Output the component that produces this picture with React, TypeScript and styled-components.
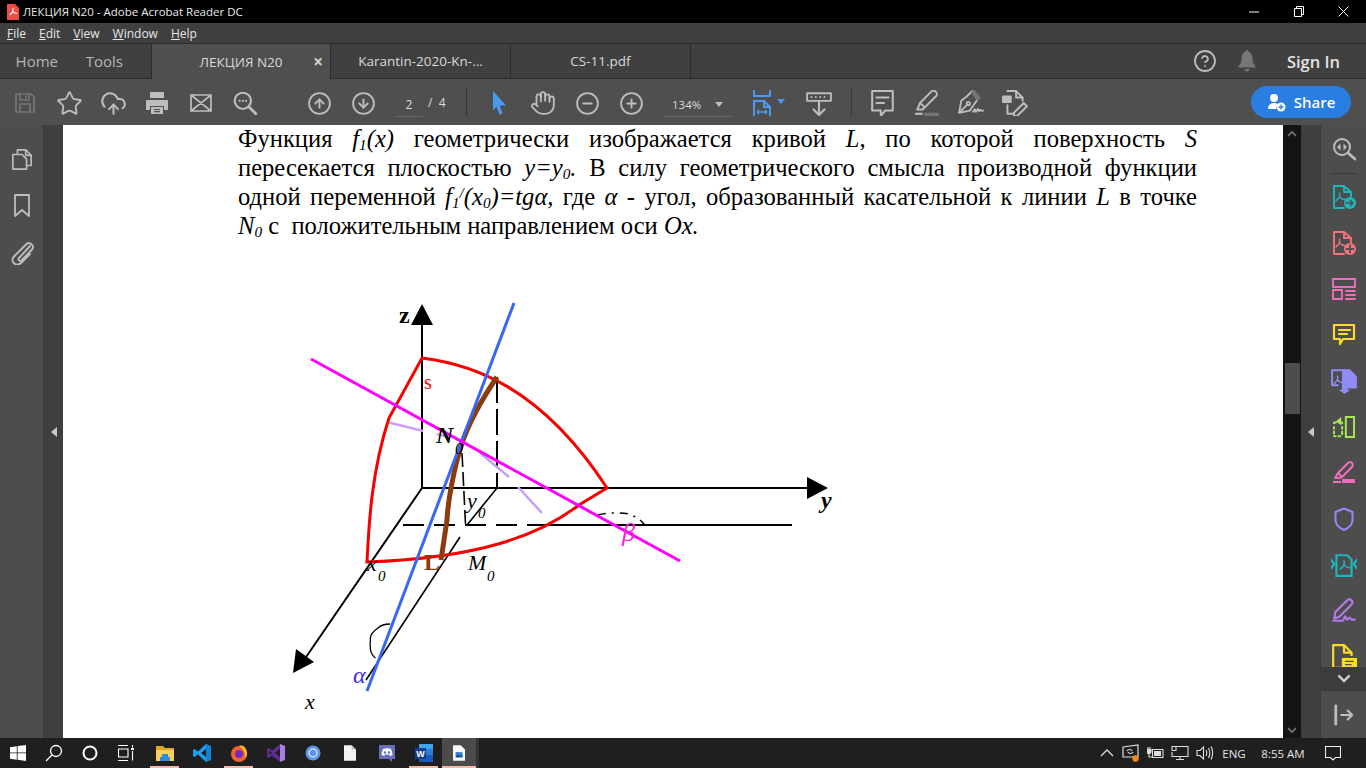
import * as React from "react";
import styled, { createGlobalStyle } from "styled-components";
import {
  CircleArrowDown,
  CircleArrowUp,
  CircleHelp,
  CircleMinus,
  CirclePlus,
  CloudUpload,
  Hand,
  Star,
} from "lucide-react";

const GlobalStyle = createGlobalStyle`
  html, body {
    margin: 0;
    height: 100%;
    overflow: hidden;
    background: #000;
  }
  #root {
    height: 100%;
  }
`;

const UI_FONT = `"Open Sans", "Noto Sans", sans-serif`;
const GREY = "#bdbdbd";

type IconProps = {
  size?: number;
  color?: string;
  sw?: number;
  children?: React.ReactNode;
};

const Ico = ({ size = 24, color = GREY, sw = 1.8, children }: IconProps) => (
  <svg
    width={size}
    height={size}
    viewBox="0 0 24 24"
    fill="none"
    stroke={color}
    strokeWidth={sw}
    strokeLinejoin="round"
    strokeLinecap="round"
  >
    {children}
  </svg>
);

// the acrobat squiggle used inside the pdf document icons
const Squiggle = ({ color, x = 0, y = 0 }: { color: string; x?: number; y?: number }) => (
  <path
    transform={`translate(${x} ${y})`}
    d="M9 8c1 3-1 6-3.5 8M9 12c1.5 1.5 3 2.5 5.5 2.5M9.5 12 6 15"
    stroke={color}
    strokeWidth={1.3}
  />
);

// title bar
const PdfLogo = () => (
  <svg width="14" height="16" viewBox="0 0 14 16">
    <path d="M1 0h8l4 4v12H1z" fill="#f04b43" />
    <path d="M7 4c.6 2.500-1 5-3.200 7M7 7.500c1 1.300 2.300 2 4.200 2M7 8 4 10.500" stroke="#fff" strokeWidth="1.100" fill="none" />
  </svg>
);

// toolbar
const SaveIcon = () => (
  <Ico size={24} color="#757575" sw={1.7}>
    <path d="M3 3h15l3 3v15H3z" />
    <path d="M7 3v6h9V3M13 5v2M7 21v-8h10v8" />
  </Ico>
);

const PrintIcon = () => (
  <svg width="24" height="24" viewBox="0 0 24 24">
    <path d="M5 1h14v6H5z" fill={GREY} />
    <path d="M2 9h20a1 1 0 0 1 1 1v9h-4v-4H5v4H1v-9a1 1 0 0 1 1-1z" fill={GREY} />
    <path d="M6 16h12v7H6z" fill={GREY} />
    <path d="M9 18.500h6M9 20.700h6" stroke="#4f4f4f" strokeWidth="1.200" />
  </svg>
);

const MailIcon = () => (
  <Ico size={24} sw={1.7}>
    <path d="M2 4h20v16H2zM2 4l20 16M22 4 2 20" />
  </Ico>
);

const FindIcon = () => (
  <Ico size={26} sw={2}>
    <circle cx="10" cy="10" r="7.500" />
    <path d="m15.500 15.500 6.500 6.500" strokeWidth={2.600} />
    <path d="M7 10h.1M10 10h.1M13 10h.1" />
  </Ico>
);

const CursorIcon = () => (
  <svg width="24" height="24" viewBox="0 0 24 24">
    <path d="M6 0l13 14.500h-6.200l2.800 8-3 1.200-3-8L6 19.500z" fill="#4a9bf0" />
  </svg>
);

const FitIcon = () => (
  <svg width="20" height="26" viewBox="0 0 20 26" fill="none" stroke="#4a9bf0" strokeWidth="2">
    <path d="M2 0v6h16V0" />
    <path d="M2 26V11h10l6 6v9" />
    <path d="M12 11v6h6" />
    <path d="M5 22h10M5 22l2-2M5 22l2 2M15 22l-2-2M15 22l-2 2" strokeWidth="1.400" />
  </svg>
);

const RulerIcon = () => (
  <Ico size={26} sw={1.700}>
    <path d="M1 3h22v7H1zM5 6.500h.1M9 6.500h.1M13 6.500h.1M17 6.500h.1" />
    <path d="M12 11v12M7 18l5 5 5-5" strokeWidth={2} />
  </Ico>
);

const CommentIcon = () => (
  <Ico size={26} sw={1.900}>
    <path d="M2 1h19v18h-7l-4 5v-5H2z" />
    <path d="M6 7h11M6 12h7" />
  </Ico>
);

const HighlightIcon = () => (
  <svg width="26" height="26" viewBox="0 0 24 24" fill="none" stroke={GREY} strokeWidth="1.800" strokeLinejoin="round">
    <path d="M16 1.500c1-1 3-1 4 0s1.500 3 .5 4L10 16l-4.500-4z" />
    <path d="M5.500 12 3 18h5l2-2" />
    <path d="M9 21h14v3H9z" fill="#737373" stroke="none" />
    <path d="M1 21h7v2H1z" fill={GREY} stroke="none" />
  </svg>
);

const SignIcon = () => (
  <svg width="26" height="26" viewBox="0 0 24 24" fill="none" stroke={GREY} strokeWidth="1.700" strokeLinejoin="round" strokeLinecap="round">
    <path d="M13 1 8 6 3 10 1 21l10-2 4-6 3-4z" />
    <path d="m1.500 20.500 7-7" />
    <circle cx="9.500" cy="12.500" r="1.500" />
    <path d="M15 1l5 6-2 2-5-7z" fill="#757575" stroke="#757575" />
    <path d="M14 20c1-2 2-3 2-1s1 1 2-1 1 3 2 1 1 1 3 0" />
  </svg>
);

const EditDocIcon = () => (
  <svg width="26" height="26" viewBox="0 0 24 24" fill="none" stroke={GREY} strokeWidth="1.800" strokeLinejoin="round" strokeLinecap="round">
    <path d="M5 1h8l6 6v3M5 14v8h6" />
    <path d="M13 1v6h6" />
    <rect x="0" y="5" width="9" height="7" rx="1" fill={GREY} stroke="none" />
    <path d="m20 12 3 3-9 9h-3v-3z" />
  </svg>
);

const ShareIcon = () => (
  <svg width="20" height="20" viewBox="0 0 20 20">
    <circle cx="7" cy="6" r="4" fill="#fff" />
    <path d="M1 17c0-4 2-6 6-6 2 0 3 .5 4 1.500-1.500 1-2 3-1.500 4.500z" fill="#fff" />
    <circle cx="14" cy="15" r="4.500" fill="#fff" />
    <path d="M14 12.500v5M11.500 15h5" stroke="#2a7de1" strokeWidth="1.300" />
  </svg>
);

const BellIcon = () => (
  <svg width="20" height="22" viewBox="0 0 20 22">
    <path d="M10 0c1 0 1.500.7 1.500 1.700C15 3 15.500 6 15.500 9c0 3.500 1 5 3 7v1.500h-17V16c2-2 3-3.500 3-7 0-3 .5-6 4-7.300C8.500.7 9 0 10 0z" fill="#767676" />
    <path d="M7.500 19h5c0 1.500-1 2.500-2.500 2.500S7.500 20.500 7.500 19z" fill="#767676" />
  </svg>
);

// side rails
const PagesIcon = () => (
  <Ico size={22} sw={1.800}>
    <path d="M7 5V1h9l6 6v11h-5" />
    <path d="M16 1v6h6" />
    <path d="M2 6h10l5 5v11H2z" />
  </Ico>
);

const BookmarkIcon = () => (
  <Ico size={24} sw={1.800}>
    <path d="M5 1h14v21l-7-6-7 6z" />
  </Ico>
);

const ClipIcon = () => (
  <Ico size={24} sw={1.900}>
    <path d="m20 5-11 12c-1.500 1.600 1 4 2.500 2.500L22 8.500c3-3.500-2-8.500-5.500-5.500L4 15.500c-4.500 5 2 11 7 6.500l9-9" />
  </Ico>
);

const ZoomPagesIcon = () => (
  <Ico size={24} sw={2}>
    <circle cx="10" cy="10" r="8" />
    <path d="m16 16 7 6" strokeWidth={2.800} />
    <path d="M8.500 6.500 5 10l3.500 3.500zM11.500 6.500 15 10l-3.500 3.500z" fill={GREY} stroke="none" />
  </Ico>
);

const DocBadge = ({ color, badge }: { color: string; badge: "arrow" | "plus" }) => (
  <Ico size={24} color={color} sw={1.900}>
    <path d="M12 23H2V1h10l7 6v5M12 1v6h7" />
    <Squiggle color={color} x={-1.500} y={0} />
    <circle cx="18" cy="18" r="6" fill={color} stroke="none" />
    {badge === "arrow" ? (
      <path d="M14 18h7M18.500 15.500 21 18l-2.500 2.500" stroke="#4f4f4f" strokeWidth={1.500} />
    ) : (
      <path d="M18 14.500v7M14.500 18h7" stroke="#4f4f4f" strokeWidth={1.800} />
    )}
  </Ico>
);

const OrganizeIcon = () => (
  <Ico size={24} color="#f26ebd" sw={1.800}>
    <path d="M1 2h22v8H1zM1 13h9v9H1zM14 14h9M14 18h9M14 22h9" strokeLinejoin="miter" />
  </Ico>
);

const RailCommentIcon = () => (
  <Ico size={24} color="#ffd92e" sw={2.200}>
    <path d="M2 2h20v14H11l-3 5v-5H2z" />
    <path d="M7 7h11M7 11h8" />
  </Ico>
);

const CombineIcon = () => (
  <svg width="26" height="26" viewBox="0 0 24 24" fill="none" stroke="#8f8cf6" strokeWidth="1.800" strokeLinejoin="round">
    <path d="M11 2H1v14h6" />
    <path d="M11 2h6l6 6v10H11z" fill="#8f8cf6" />
    <Squiggle color="#8f8cf6" x={-3} y={-1} />
    <path d="M10 16h5v4h3l-5.500 4L7 20h3z" fill="#8f8cf6" stroke="none" />
  </svg>
);

const ExportEditIcon = () => (
  <Ico size={22} color="#a4e94f" sw={2.200}>
    <path d="M14 1h9v22h-9z" strokeLinejoin="miter" />
    <path d="M1 12v2M1 17v2M1 22h2M6 22h2M1 8V7h2M10 7v1M10 12v2M10 17v3" />
    <path d="M9 1 3 6l6 4z" fill="#a4e94f" stroke="none" />
  </Ico>
);

const RailHighlightIcon = () => (
  <svg width="24" height="24" viewBox="0 0 24 24" fill="none" stroke="#f26ebd" strokeWidth="2" strokeLinejoin="round">
    <path d="M16 2c1-1 3-1 4 0s1 3 0 4L10 16l-4-4z" />
    <path d="M6 12 3 17h4l3-1" />
    <path d="M10 18h13v4H10z" fill="#f26ebd" stroke="none" />
    <path d="M1 20h8v2H1z" fill="#f26ebd" stroke="none" />
  </svg>
);

const ShieldIcon = () => (
  <Ico size={24} color="#8f8cf6" sw={2}>
    <path d="M12 1.500 20.500 5v8c0 5-4 8-8.500 10C7.500 21 3.500 18 3.500 13V5z" />
  </Ico>
);

const CompressIcon = () => (
  <Ico size={26} color="#1fb7bd" sw={2}>
    <path d="M5 3h10l4 4v15H5z" strokeLinejoin="miter" />
    <Squiggle color="#1fb7bd" x={3} y={0} />
    <path d="m0 7 3 4-3 4M24 7l-3 4 3 4" />
  </Ico>
);

const RailSignIcon = () => (
  <svg width="26" height="26" viewBox="0 0 24 24" fill="none" stroke="#b07ae8" strokeWidth="2" strokeLinejoin="round" strokeLinecap="round">
    <path d="M15 2c1-1 3-1 4 0s1 3 0 4L8 17l-5 2 1-6z" />
    <path d="M2 21h9c1 0 1-4 2-4s1 3 2 3 1-2 2-2 1 2 2 2h3" />
  </svg>
);

const NoteDocIcon = () => (
  <svg width="26" height="26" viewBox="0 0 24 24" fill="none" stroke="#ffd92e" strokeWidth="2" strokeLinejoin="round">
    <path d="M12 22H2V1h10l7 7v3" />
    <path d="M12 1v7h7" />
    <path d="M10 13h14v9h-8l-3 3v-3h-3z" fill="#ffd92e" stroke="none" />
    <path d="M13 16h8M13 19h6" stroke="#4f4f4f" strokeWidth="1.300" />
  </svg>
);

const ExitIcon = () => (
  <Ico size={22} sw={2.200}>
    <path d="M3 2v20" strokeWidth={3} />
    <path d="M9 12h12M16 7l5 5-5 5" />
  </Ico>
);

const ChevronIcon = ({ up, color, w = 10 }: { up?: boolean; color: string; w?: number }) => (
  <svg width={w} height={w * 0.7} viewBox="0 0 10 7" fill="none" stroke={color} strokeWidth="1.700">
    <path d={up ? "m1 6 4-4 4 4" : "m1 1 4 4 4-4"} />
  </svg>
);

// taskbar
const WinLogo = () => (
  <svg width="16" height="16" viewBox="0 0 16 16" fill="#fff">
    <path d="M0 2.200 6.800 1.200V7.500H0zM7.600 1.100 16 0v7.500H7.600zM0 8.300h6.800v6.400L0 13.800zM7.600 8.300H16V16l-8.400-1.200z" />
  </svg>
);

const TaskSearch = () => (
  <svg width="18" height="18" viewBox="0 0 18 18" fill="none" stroke="#fff" strokeWidth="1.300">
    <circle cx="11" cy="7" r="5.500" />
    <path d="M7 11 1 17" />
  </svg>
);

const TaskRing = () => (
  <svg width="16" height="16" viewBox="0 0 16 16" fill="none" stroke="#fff" strokeWidth="2">
    <circle cx="8" cy="8" r="6.500" />
  </svg>
);

const TaskView = () => (
  <svg width="16" height="16" viewBox="0 0 16 16" fill="none" stroke="#fff" strokeWidth="1.100">
    <path d="M0 .5h10M0 15.500h10M.5 4h9.500v8H.5zM14.500 0v2.500M14.500 6v9.500" />
    <path d="M13 3h3v2h-3z" fill="#fff" stroke="none" />
  </svg>
);

const FolderIcon = () => (
  <svg width="18" height="16" viewBox="0 0 18 16">
    <path d="M0 1h7l2 2h9v3H0z" fill="#e0a72c" />
    <path d="M0 5h18v11H0z" fill="#f7cf5c" />
    <path d="M6 9h6v3h2v4H4v-4h2z" fill="#2e8fd8" />
  </svg>
);

const CodeIcon = () => (
  <svg width="18" height="18" viewBox="0 0 18 18">
    <path d="M13 0 18 2v14l-5 2-8-7.500L1.500 13 0 12V6l1.500-1L5 7.500z" fill="#1f9cf0" />
    <path d="M13 5 8 9l5 4z" fill="#1d1d1d" />
    <path d="M13 0 18 2v14l-5 2z" fill="#0065a9" opacity=".45" />
  </svg>
);

const FoxIcon = () => (
  <svg width="18" height="18" viewBox="0 0 18 18">
    <circle cx="9" cy="10" r="8" fill="#f0642c" />
    <path d="M9 2c5-2 8 3 8 8 0 2-1 3-2 4 1-5-1-9-6-12z" fill="#ffbd2e" />
    <circle cx="9" cy="10" r="4" fill="#6e2fc0" />
  </svg>
);

const StudioIcon = () => (
  <svg width="18" height="18" viewBox="0 0 18 18">
    <path d="M13 0l5 2v14l-5 2-8-6.500L2 14l-2-1V5l2-1 3 2.500z" fill="#5c2d91" />
    <path d="M13 0l5 2v14l-5 2z" fill="#a97ee0" />
    <path d="M13 5 8 9l5 4zM2.500 7v4L5 9z" fill="#1d1d1d" />
  </svg>
);

const BlueOrbIcon = () => (
  <svg width="16" height="16" viewBox="0 0 16 16">
    <circle cx="8" cy="8" r="7.500" fill="#5e93ea" />
    <circle cx="8" cy="8" r="4" fill="none" stroke="#cfe0fa" strokeWidth="1.500" />
  </svg>
);

const BlankDocIcon = () => (
  <svg width="12" height="16" viewBox="0 0 14 18">
    <path d="M0 0h9l5 5v13H0z" fill="#f2f2f2" />
    <path d="M9 0l5 5H9z" fill="#bdbdbd" />
  </svg>
);

const ChatIcon = () => (
  <svg width="18" height="18" viewBox="0 0 18 18">
    <path d="M1 1h16v14h-3v3l-3-3H1z" fill="#6670b8" />
    <path d="M5 5c3-1 5-1 8 0 1 2 1.500 4 1.500 6l-2.500 1-1-1.500H7L6 12l-2.500-1C3.500 9 4 7 5 5z" fill="#fff" />
    <circle cx="7" cy="8.500" r="1.200" fill="#6670b8" />
    <circle cx="11" cy="8.500" r="1.200" fill="#6670b8" />
  </svg>
);

const WordIcon = () => (
  <svg width="18" height="18" viewBox="0 0 18 18">
    <path d="M4 0h14v18H4z" fill="#2b7cd3" />
    <path d="M4 0h14v5H4z" fill="#41a5ee" />
    <path d="M4 11h14v7H4z" fill="#185abd" />
    <path d="M0 4h11v11H0z" fill="#103f91" />
    <text x="5.500" y="13" textAnchor="middle" fontFamily="Liberation Sans" fontWeight="700" fontSize="9" fill="#fff">
      W
    </text>
  </svg>
);

const ImageDocIcon = () => (
  <svg width="12" height="16" viewBox="0 0 14 18">
    <path d="M0 0h9l5 5v13H0z" fill="#f7f7f7" />
    <path d="M3 8h8v6H3z" fill="#2a7fd0" />
    <path d="M3 14l3-3 2 2 3-2v3z" fill="#0f3e7a" />
  </svg>
);

const TrayChevron = () => (
  <svg width="14" height="10" viewBox="0 0 14 10" fill="none" stroke="#ddd" strokeWidth="1.300">
    <path d="M1 8l6-6 6 6" />
  </svg>
);

const TrayApp = () => (
  <svg width="18" height="18" viewBox="0 0 18 18" fill="none" stroke="#ddd" strokeWidth="1.200">
    <path d="M1 3 16 1v12H1z" />
    <path d="M5 7c1-2 4-2 5 0M11 8c-1 2-4 2-5 0" />
    <circle cx="13.500" cy="14.500" r="3.200" fill="#f28c1e" stroke="none" />
  </svg>
);

const TrayBattery = () => (
  <svg width="18" height="14" viewBox="0 0 18 14" fill="none" stroke="#ddd" strokeWidth="1.100">
    <path d="M1 1v2M3 1v2M0 3.500h4V6c0 1-1 1.500-2 1.500S0 7 0 6z" fill="#ddd" />
    <path d="M2 8v3h3" />
    <path d="M5.500 3.500H16v8H5.500z" />
    <path d="M7 5h7v5H7z" fill="#ddd" stroke="none" />
  </svg>
);

const TrayNet = () => (
  <svg width="18" height="16" viewBox="0 0 18 16" fill="none" stroke="#ddd" strokeWidth="1.100">
    <path d="M5 1.500h12v10H1V7" />
    <path d="M1 1.500h4v4H1zM9 11.500v3M5 14.500h8" />
  </svg>
);

const TrayVolume = () => (
  <svg width="17" height="16" viewBox="0 0 17 16" fill="none" stroke="#ddd" strokeWidth="1.100">
    <path d="M1 5.500h3L7.500 2v12L4 10.500H1z" />
    <path d="M10 5c1 2 1 4 0 6M12.500 3c1.500 3 1.500 7 0 10M15 1.500c2 4 2 9 0 13" />
  </svg>
);

const TrayNotice = () => (
  <svg width="16" height="15" viewBox="0 0 16 15" fill="none" stroke="#eee" strokeWidth="1.100">
    <path d="M.5.500h15v11h-5L8 14l-2.500-2.500h-5z" />
  </svg>
);

// window
const Shell = styled.div`
  height: 100vh;
  display: flex;
  flex-direction: column;
  font-family: ${UI_FONT};
  overflow: hidden;
`;

const TitleBar = styled.header`
  height: 23px;
  flex: none;
  background: #000;
  color: #e8e8e8;
  display: flex;
  align-items: center;
  font-size: 11.500px;
  padding-left: 3px;
`;

const TitleLogo = styled.span`
  display: flex;
  width: 20px;
  justify-content: center;
`;

const TitleText = styled.span`
  flex: 1;
  white-space: nowrap;
`;

const WinButton = styled.span`
  width: 45px;
  height: 23px;
  display: flex;
  align-items: center;
  justify-content: center;
`;

const MenuBar = styled.nav`
  height: 20px;
  flex: none;
  background: #3f3f3f;
  display: flex;
  align-items: center;
  gap: 13px;
  padding-left: 7px;
  font-size: 12px;
  color: #e6e6e6;
`;

const MenuItem = styled.span`
  &::first-letter {
    text-decoration: underline;
  }
`;

const TabBar = styled.div`
  height: 36px;
  flex: none;
  box-sizing: border-box;
  background: #404040;
  border-top: 1px solid #2c2c2c;
  border-bottom: 1px solid #2c2c2c;
  display: flex;
  align-items: stretch;
  color: #d8d8d8;
`;

const NavTab = styled.span<{ $w: number }>`
  width: ${(p) => p.$w}px;
  display: flex;
  align-items: center;
  justify-content: flex-end;
  font-size: 15px;
  color: #b5b5b5;
`;

const DocTab = styled.div<{ $active?: boolean; $ml?: number }>`
  width: 180px;
  position: relative;
  box-sizing: border-box;
  margin-left: ${(p) => p.$ml ?? 0}px;
  margin-bottom: ${(p) => (p.$active ? "-1px" : "0")};
  background: ${(p) => (p.$active ? "#4f4f4f" : "#404040")};
  border-right: 1px solid #2c2c2c;
  border-left: ${(p) => (p.$active ? "1px solid #2c2c2c" : "none")};
  display: flex;
  align-items: center;
  justify-content: center;
  font-size: 13.500px;
  white-space: nowrap;
`;

const TabClose = styled.span`
  position: absolute;
  right: 7px;
  top: 6px;
  font-size: 17px;
  font-weight: 700;
  color: #cfcfcf;
`;

const TabRight = styled.div`
  margin-left: auto;
  display: flex;
  align-items: center;
  padding-right: 26px;
`;

const BellSlot = styled.span`
  display: flex;
  margin-left: 20px;
`;

const SignIn = styled.span`
  margin-left: 30px;
  font-size: 16.500px;
  font-weight: 600;
  color: #e4e4e4;
`;

const ToolBar = styled.div`
  height: 46px;
  flex: none;
  background: #4f4f4f;
  display: flex;
  align-items: center;
  padding-left: 3px;
  color: #dcdcdc;
`;

const ToolGroup = styled.div<{ $ml?: number }>`
  display: flex;
  margin-left: ${(p) => p.$ml ?? 0}px;
`;

const Tool = styled.span`
  width: 44px;
  height: 46px;
  padding-top: 2px;
  box-sizing: border-box;
  position: relative;
  display: flex;
  align-items: center;
  justify-content: center;
`;

const ToolCaret = styled.span`
  position: absolute;
  right: -1px;
  top: 20px;
  width: 0;
  height: 0;
  border-left: 4px solid transparent;
  border-right: 4px solid transparent;
  border-top: 5px solid #4a9bf0;
`;

const ToolDivider = styled.span<{ $ml?: number }>`
  width: 1px;
  height: 28px;
  background: #363636;
  margin-left: ${(p) => p.$ml ?? 0}px;
`;

const PageBox = styled.div`
  width: 71px;
  margin-left: 10px;
  display: flex;
  align-items: center;
  font-size: 12px;
`;

const PageInput = styled.span`
  width: 28px;
  height: 24px;
  margin-top: 5px;
  box-sizing: border-box;
  border-bottom: 1px solid #6a6a6a;
  display: flex;
  align-items: center;
  justify-content: center;
  margin-right: 5px;
`;

const ZoomBox = styled.div`
  width: 68px;
  height: 24px;
  margin: 5px 0 0 10px;
  box-sizing: border-box;
  border-bottom: 1px solid #6a6a6a;
  display: flex;
  align-items: center;
  justify-content: space-between;
  padding: 0 8px 0 9px;
  font-size: 11.500px;
`;

const ZoomCaret = styled.span`
  width: 0;
  height: 0;
  border-left: 4px solid transparent;
  border-right: 4px solid transparent;
  border-top: 5px solid #bdbdbd;
`;

const ShareButton = styled.button`
  width: 100px;
  height: 32px;
  margin: 0 15px 0 auto;
  padding: 0;
  border: none;
  border-radius: 16px;
  background: #2a7de1;
  color: #fff;
  display: flex;
  align-items: center;
  justify-content: center;
  gap: 7px;
  font-family: ${UI_FONT};
  font-size: 15px;
  font-weight: 600;
`;

// workspace
const Workspace = styled.main`
  flex: 1;
  min-height: 0;
  display: flex;
`;

const LeftRail = styled.aside`
  width: 44px;
  flex: none;
  box-sizing: border-box;
  background: #4d4d4d;
  border-right: 1px solid #3a3a3a;
  display: flex;
  flex-direction: column;
  align-items: center;
  padding-top: 24px;
  gap: 23px;
`;

const CollapseStrip = styled.div`
  width: 19px;
  flex: none;
  background: #3f3f3f;
  display: flex;
  align-items: center;
  justify-content: center;
`;

const CollapseArrow = styled.span`
  width: 0;
  height: 0;
  border-top: 5px solid transparent;
  border-bottom: 5px solid transparent;
  border-right: 6px solid #c8c8c8;
`;

const PageArea = styled.div`
  flex: 1;
  min-width: 0;
  background: #fff;
  overflow: hidden;
  padding-left: 175px;
  padding-right: 86px;
  font-family: "Liberation Serif", "Times New Roman", serif;
  color: #000;
`;

const Paragraph = styled.div`
  font-size: 24.600px;
  line-height: 29px;
  margin-top: -1px;
`;

const TextLine = styled.div<{ $last?: boolean }>`
  text-align: justify;
  text-align-last: ${(p) => (p.$last ? "left" : "justify")};
  white-space: pre-wrap;
  height: 29px;
`;

const Low = styled.sub`
  font-size: 0.62em;
  line-height: 0;
  vertical-align: -0.2em;
`;

const High = styled.sup`
  font-size: 0.62em;
  line-height: 0;
  vertical-align: 0.45em;
`;

const Figure = styled.svg`
  display: block;
  margin: 55px 0 0 42px;
`;

const Label = styled.text<{ $size: number; $color?: string; $italic?: boolean; $bold?: boolean }>`
  font-family: "Liberation Serif", "Times New Roman", serif;
  font-size: ${(p) => p.$size}px;
  fill: ${(p) => p.$color ?? "#000"};
  font-style: ${(p) => (p.$italic ? "italic" : "normal")};
  font-weight: ${(p) => (p.$bold ? 700 : 400)};
`;

const ScrollBar = styled.div`
  width: 18px;
  flex: none;
  background: #141414;
  position: relative;
`;

const ScrollThumb = styled.span`
  position: absolute;
  left: 2px;
  right: 1px;
  top: 238px;
  height: 51px;
  background: #4d4d4d;
`;

const ScrollArrow = styled.span<{ $down?: boolean }>`
  position: absolute;
  left: 4px;
  ${(p) => (p.$down ? "bottom: 4px;" : "top: 5px;")}
  display: flex;
`;

const RightRail = styled.aside`
  width: 46px;
  flex: none;
  box-sizing: border-box;
  background: #4d4d4d;
  border-left: 1px solid #3a3a3a;
  display: flex;
  flex-direction: column;
  align-items: stretch;
`;

const RailHead = styled.div`
  height: 48px;
  flex: none;
  display: flex;
  align-items: center;
  justify-content: center;
`;

const RailRule = styled.div`
  height: 1px;
  flex: none;
  margin: 0 9px;
  background: #3a3a3a;
`;

const RailList = styled.div`
  flex: 1;
  min-height: 0;
  overflow: hidden;
`;

const RailSlot = styled.div`
  height: 46px;
  display: flex;
  align-items: center;
  justify-content: center;
`;

const RailCollapse = styled.div`
  height: 24px;
  flex: none;
  background: #3c3c3c;
  display: flex;
  align-items: center;
  justify-content: center;
`;

const RailFoot = styled.div`
  height: 47px;
  flex: none;
  display: flex;
  align-items: center;
  justify-content: center;
`;

// taskbar
const TaskBar = styled.footer`
  height: 30px;
  flex: none;
  background: #1f1f1f;
  display: flex;
  align-items: stretch;
  color: #e6e6e6;
  font-family: ${UI_FONT};
`;

const SysButton = styled.span`
  width: 36px;
  display: flex;
  align-items: center;
  justify-content: center;
`;

const AppList = styled.div`
  display: flex;
  margin-left: 2px;
`;

const AppButton = styled.span<{ $open?: boolean; $active?: boolean }>`
  width: 37px;
  box-sizing: border-box;
  position: relative;
  display: flex;
  align-items: center;
  justify-content: center;
  background: ${(p) => (p.$active ? "#4b4b4b" : "transparent")};
  border-right: ${(p) => (p.$active ? "3px solid #333" : "none")};

  &::after {
    content: "";
    display: ${(p) => (p.$open ? "block" : "none")};
    position: absolute;
    left: ${(p) => (p.$active ? "0" : "4px")};
    right: ${(p) => (p.$active ? "0" : "4px")};
    bottom: 0;
    height: 2px;
    background: #f6baac;
  }
`;

const Tray = styled.div`
  margin-left: auto;
  display: flex;
  align-items: center;
`;

const TraySlot = styled.span<{ $w: number }>`
  width: ${(p) => p.$w}px;
  display: flex;
  justify-content: center;
  align-items: center;
`;

const TrayText = styled.span<{ $w: number }>`
  width: ${(p) => p.$w}px;
  text-align: center;
  font-size: 11.500px;
  white-space: nowrap;
`;

const railTools = [
  <DocBadge key="export" color="#1fb7bd" badge="arrow" />,
  <DocBadge key="create" color="#f4717a" badge="plus" />,
  <OrganizeIcon key="organize" />,
  <RailCommentIcon key="comment" />,
  <CombineIcon key="combine" />,
  <ExportEditIcon key="edit" />,
  <RailHighlightIcon key="highlight" />,
  <ShieldIcon key="protect" />,
  <CompressIcon key="compress" />,
  <RailSignIcon key="sign" />,
  <NoteDocIcon key="note" />,
];

const apps = [
  { id: "files", icon: <FolderIcon />, open: true },
  { id: "code", icon: <CodeIcon /> },
  { id: "fox", icon: <FoxIcon />, open: true },
  { id: "studio", icon: <StudioIcon /> },
  { id: "orb", icon: <BlueOrbIcon /> },
  { id: "doc", icon: <BlankDocIcon /> },
  { id: "chat", icon: <ChatIcon /> },
  { id: "word", icon: <WordIcon />, open: true },
  { id: "reader", icon: <ImageDocIcon />, open: true, active: true },
];

const Diagram = () => (
  <Figure width="560" height="425" viewBox="280 295 560 425" fill="none">
    {/* axes */}
    <path d="M422 488V325M422 488H808M422 488 304 660" stroke="#000" strokeWidth="2" />
    <path d="M422 304 411 325H433zM807 477 828 488 807 499zM293 673l3-24 18 13z" fill="#000" />
    <path d="M497 488 467 525M460 537 366 680" stroke="#000" strokeWidth="1.600" />
    <path d="M545 525H792" stroke="#000" strokeWidth="2" />
    <path d="M403 525H545" stroke="#000" strokeWidth="2" strokeDasharray="21 10" />
    <path d="M497 377V488" stroke="#000" strokeWidth="2" strokeDasharray="26 6" />
    <path d="M462 453 465.500 524" stroke="#000" strokeWidth="1.600" strokeDasharray="14 5" />
    <path d="M598 515c8-2 20-3 31-1l9 4 7 7" stroke="#000" strokeWidth="1.500" strokeDasharray="8 6 2 6" />
    <path d="M390 624c-6 0-10 2-12 4-4 3-7 5-7.500 9-.5 5-.5 9 0 13 .5 3 2.500 6 5 8" stroke="#000" strokeWidth="1.300" />
    {/* hidden part of the surface */}
    <path d="M387 422 423 431M437 434 448 437M480 453 509 477M518 487 542 513" stroke="#c9a0f8" strokeWidth="2.500" />
    {/* surface S */}
    <path
      d="M422 358C470 364 540 385 607 488L579 505C540 535 480 558 367 562 369 520 372 470 389 418Z"
      stroke="#f60000"
      strokeWidth="3"
      strokeLinejoin="miter"
    />
    {/* curve L */}
    <path d="M497 377C480 402 470 420 462 443 454 468 448 500 447 520L441 560" stroke="#8a3c0f" strokeWidth="5" />
    <path d="M514 303 367 691" stroke="#3a67f2" strokeWidth="3" />
    <path d="M311 359 680 561" stroke="#ff00ff" strokeWidth="3" />
    <Label x="399" y="323" $size={24} $bold>z</Label>
    <Label x="424" y="389" $size={20} $color="#f60000">s</Label>
    <Label x="436" y="443" $size={24} $italic $bold>N</Label>
    <Label x="455" y="454" $size={16} $italic>0</Label>
    <Label x="467" y="508" $size={22} $italic>y</Label>
    <Label x="478" y="518" $size={15} $italic>0</Label>
    <Label x="367" y="571" $size={22} $italic>x</Label>
    <Label x="378" y="581" $size={15} $italic>0</Label>
    <Label x="424" y="570" $size={24} $color="#8a3c0f" $bold>L</Label>
    <Label x="468" y="570" $size={22} $italic>M</Label>
    <Label x="487" y="581" $size={15} $italic>0</Label>
    <Label x="305" y="709" $size={22} $italic>x</Label>
    <Label x="821" y="508" $size={24} $italic $bold>y</Label>
    <Label x="353" y="683" $size={24} $color="#3a2cf0" $italic>α</Label>
    <Label x="622" y="541" $size={26} $color="#ff1ee0" $italic>β</Label>
  </Figure>
);

export default function App() {
  return (
    <Shell>
      <GlobalStyle />
      <TitleBar>
        <TitleLogo>
          <PdfLogo />
        </TitleLogo>
        <TitleText>ЛЕКЦИЯ N20 - Adobe Acrobat Reader DC</TitleText>
        <WinButton>
          <svg width="10" height="10" viewBox="0 0 10 10" stroke="#fff">
            <path d="M0 5h10" />
          </svg>
        </WinButton>
        <WinButton>
          <svg width="10" height="11" viewBox="0 0 10 11" fill="none" stroke="#fff">
            <path d="M.5 2.500h7v8h-7zM2.500 2.500V.5h7v8h-2" />
          </svg>
        </WinButton>
        <WinButton>
          <svg width="11" height="11" viewBox="0 0 11 11" stroke="#fff">
            <path d="M.5.5l10 10M10.500.5l-10 10" />
          </svg>
        </WinButton>
      </TitleBar>
      <MenuBar>
        {["File", "Edit", "View", "Window", "Help"].map((m) => (
          <MenuItem key={m}>{m}</MenuItem>
        ))}
      </MenuBar>
      <TabBar>
        <NavTab $w={58}>Home</NavTab>
        <NavTab $w={65}>Tools</NavTab>
        <DocTab $active $ml={28}>
          ЛЕКЦИЯ N20
          <TabClose>×</TabClose>
        </DocTab>
        <DocTab>Karantin-2020-Kn-...</DocTab>
        <DocTab>CS-11.pdf</DocTab>
        <TabRight>
          <CircleHelp size={24} color={GREY} strokeWidth={1.8} />
          <BellSlot>
            <BellIcon />
          </BellSlot>
          <SignIn>Sign In</SignIn>
        </TabRight>
      </TabBar>
      <ToolBar>
        <ToolGroup>
          <Tool><SaveIcon /></Tool>
          <Tool><Star size={27} color={GREY} strokeWidth={1.6} /></Tool>
          <Tool><CloudUpload size={27} color={GREY} strokeWidth={1.8} /></Tool>
          <Tool><PrintIcon /></Tool>
          <Tool><MailIcon /></Tool>
          <Tool><FindIcon /></Tool>
        </ToolGroup>
        <ToolGroup $ml={30}>
          <Tool><CircleArrowUp size={25} color={GREY} strokeWidth={1.8} /></Tool>
          <Tool><CircleArrowDown size={25} color={GREY} strokeWidth={1.8} /></Tool>
        </ToolGroup>
        <PageBox>
          <PageInput>2</PageInput>/&nbsp;&nbsp;4
        </PageBox>
        <ToolDivider />
        <ToolGroup $ml={10}>
          <Tool><CursorIcon /></Tool>
          <Tool><Hand size={26} color={GREY} strokeWidth={1.7} /></Tool>
          <Tool><CircleMinus size={25} color={GREY} strokeWidth={1.8} /></Tool>
          <Tool><CirclePlus size={25} color={GREY} strokeWidth={1.8} /></Tool>
        </ToolGroup>
        <ZoomBox>
          134%
          <ZoomCaret />
        </ZoomBox>
        <ToolGroup $ml={9}>
          <Tool>
            <FitIcon />
            <ToolCaret />
          </Tool>
        </ToolGroup>
        <ToolGroup $ml={13}>
          <Tool><RulerIcon /></Tool>
        </ToolGroup>
        <ToolDivider $ml={10} />
        <ToolGroup $ml={9}>
          <Tool><CommentIcon /></Tool>
          <Tool><HighlightIcon /></Tool>
          <Tool><SignIcon /></Tool>
          <Tool><EditDocIcon /></Tool>
        </ToolGroup>
        <ShareButton>
          <ShareIcon />
          Share
        </ShareButton>
      </ToolBar>
      <Workspace>
        <LeftRail>
          <PagesIcon />
          <BookmarkIcon />
          <ClipIcon />
        </LeftRail>
        <CollapseStrip>
          <CollapseArrow />
        </CollapseStrip>
        <PageArea>
          <Paragraph>
            <TextLine>
              Функция <i>f<Low>1</Low>(x)</i> геометрически изображается кривой <i>L</i>, по которой поверхность <i>S</i>
            </TextLine>
            <TextLine>
              пересекается плоскостью <i>y=y<Low>0</Low>.</i> В силу геометрического смысла производной функции
            </TextLine>
            <TextLine>
              одной переменной <i>f<Low>1</Low><High>/</High>(x<Low>0</Low>)=tgα,</i> где <i>α</i> - угол, образованный касательной к линии <i>L</i> в точке
            </TextLine>
            <TextLine $last>
              <i>N<Low>0</Low></i> с  положительным направлением оси <i>Ox.</i>
            </TextLine>
          </Paragraph>
          <Diagram />
        </PageArea>
        <ScrollBar>
          <ScrollArrow><ChevronIcon up color="#777" /></ScrollArrow>
          <ScrollThumb />
          <ScrollArrow $down><ChevronIcon color="#777" /></ScrollArrow>
        </ScrollBar>
        <CollapseStrip>
          <CollapseArrow />
        </CollapseStrip>
        <RightRail>
          <RailHead><ZoomPagesIcon /></RailHead>
          <RailRule />
          <RailList>
            {railTools.map((tool) => (
              <RailSlot key={tool.key}>{tool}</RailSlot>
            ))}
          </RailList>
          <RailCollapse>
            <ChevronIcon color="#cfcfcf" w={14} />
          </RailCollapse>
          <RailFoot><ExitIcon /></RailFoot>
        </RightRail>
      </Workspace>
      <TaskBar>
        <SysButton><WinLogo /></SysButton>
        <SysButton><TaskSearch /></SysButton>
        <SysButton><TaskRing /></SysButton>
        <SysButton><TaskView /></SysButton>
        <AppList>
          {apps.map((app) => (
            <AppButton key={app.id} $open={app.open} $active={app.active}>
              {app.icon}
            </AppButton>
          ))}
        </AppList>
        <Tray>
          <TraySlot $w={24}><TrayChevron /></TraySlot>
          <TraySlot $w={24}><TrayApp /></TraySlot>
          <TraySlot $w={25}><TrayBattery /></TraySlot>
          <TraySlot $w={24}><TrayNet /></TraySlot>
          <TraySlot $w={24}><TrayVolume /></TraySlot>
          <TrayText $w={36}>ENG</TrayText>
          <TrayText $w={62}>8:55 AM</TrayText>
          <TraySlot $w={38}><TrayNotice /></TraySlot>
          <TraySlot $w={14} />
        </Tray>
      </TaskBar>
    </Shell>
  );
}
